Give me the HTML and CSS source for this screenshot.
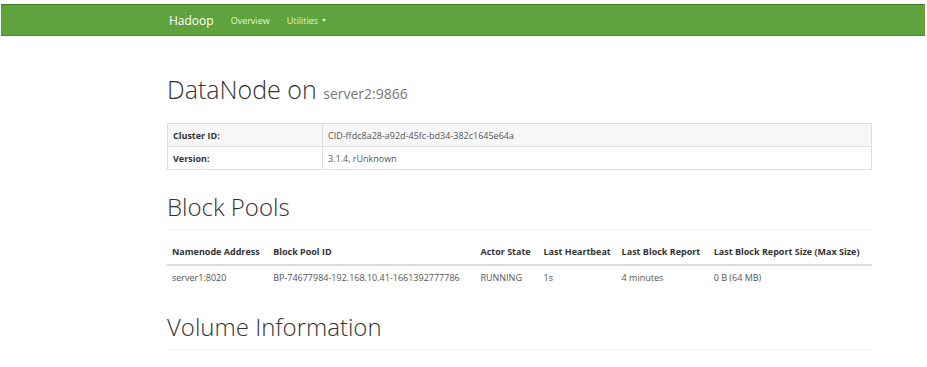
FILE: index.html
```html
<!DOCTYPE html>
<html>
<head>
<meta charset="utf-8">
<link rel="stylesheet" href="styles.css">
</head>
<body>
<nav class="navbar">
  <div class="nav-inner">
    <span class="brand">Hadoop</span>
    <span class="nav-link">Overview</span>
    <span class="nav-link">Utilities <span class="caret"></span></span>
  </div>
</nav>
<main class="container">
  <div class="page-title">
    <h1>DataNode on <small>server2:9866</small></h1>
  </div>
  <table class="info-table">
    <tr class="striped"><th>Cluster ID:</th><td>CID-ffdc8a28-a92d-45fc-bd34-382c1645e64a</td></tr>
    <tr><th>Version:</th><td>3.1.4, rUnknown</td></tr>
  </table>
  <div class="page-header"><h2>Block Pools</h2></div>
  <table class="pool-table">
    <colgroup>
      <col class="c1"><col class="c2"><col class="c3"><col class="c4"><col class="c5"><col class="c6">
    </colgroup>
    <thead>
      <tr><th>Namenode Address</th><th>Block Pool ID</th><th>Actor State</th><th>Last Heartbeat</th><th>Last Block Report</th><th>Last Block Report Size (Max Size)</th></tr>
    </thead>
    <tbody>
      <tr><td>server1:8020</td><td>BP-74677984-192.168.10.41-1661392777786</td><td>RUNNING</td><td>1s</td><td>4 minutes</td><td>0 B (64 MB)</td></tr>
    </tbody>
  </table>
  <div class="page-header vol"><h2>Volume Information</h2></div>
</main>
</body>
</html>
```
FILE: styles.css
```css
html, body { margin: 0; padding: 0; background: #fff; }
body {
  font-family: "Open Sans", "Noto Sans", sans-serif;
  color: #333;
  font-size: 9px;
  padding-top: 4px;
}
.navbar {
  margin: 0 2px 0 1px;
  height: 30px;
  background: #5fa33e;
  border-top: 1px solid #3f7a25;
  border-bottom: 1px solid #4e8a32;
}
.nav-inner {
  margin-left: 168px;
  display: flex;
  align-items: center;
  height: 30px;
}
.brand { color: #fff; font-size: 12px; margin-right: 17px; }
.nav-link { color: #e4f0dc; font-size: 9px; margin-right: 17px; display: flex; align-items: center; }
.caret {
  display: inline-block; width: 0; height: 0; margin-left: 4px;
  border-top: 3px solid #e4f0dc; border-left: 2.5px solid transparent; border-right: 2.5px solid transparent;
}
.container { margin-left: 167px; width: 705px; }
.page-title { padding-top: 38px; height: 49px; }
h1 { margin: 0; font-weight: 300; font-size: 25px; color: #333; line-height: 30px; }
h1 small { font-size: 14px; color: #777; font-weight: 400; }
table { border-collapse: collapse; width: 705px; }
.info-table { border: 1px solid #ddd; }
.info-table th, .info-table td { height: 22px; padding: 0 5px; text-align: left; border-top: 1px solid #ddd; vertical-align: middle; }
.info-table th { width: 144px; font-weight: 700; border-right: 1px solid #ddd; }
.info-table td { color: #555; }
.info-table .striped { background: #f7f7f7; }
.page-header { margin-top: 24px; padding-bottom: 9px; border-bottom: 1px solid #eee; }
h2 { margin: 0; font-weight: 300; font-size: 24px; line-height: 26px; color: #333; }
.pool-table { margin-top: 14px; }
.pool-table th { text-align: left; font-weight: 700; padding: 0 5px 6px; border-bottom: 2px solid #ddd; height: 14px; }
.pool-table td { padding: 0 5px; height: 22px; color: #555; }
.c1 { width: 101px; } .c2 { width: 207px; } .c3 { width: 63px; } .c4 { width: 78px; } .c5 { width: 92px; } .c6 { width: 163px; }
.vol { margin-top: 26px; }
```
